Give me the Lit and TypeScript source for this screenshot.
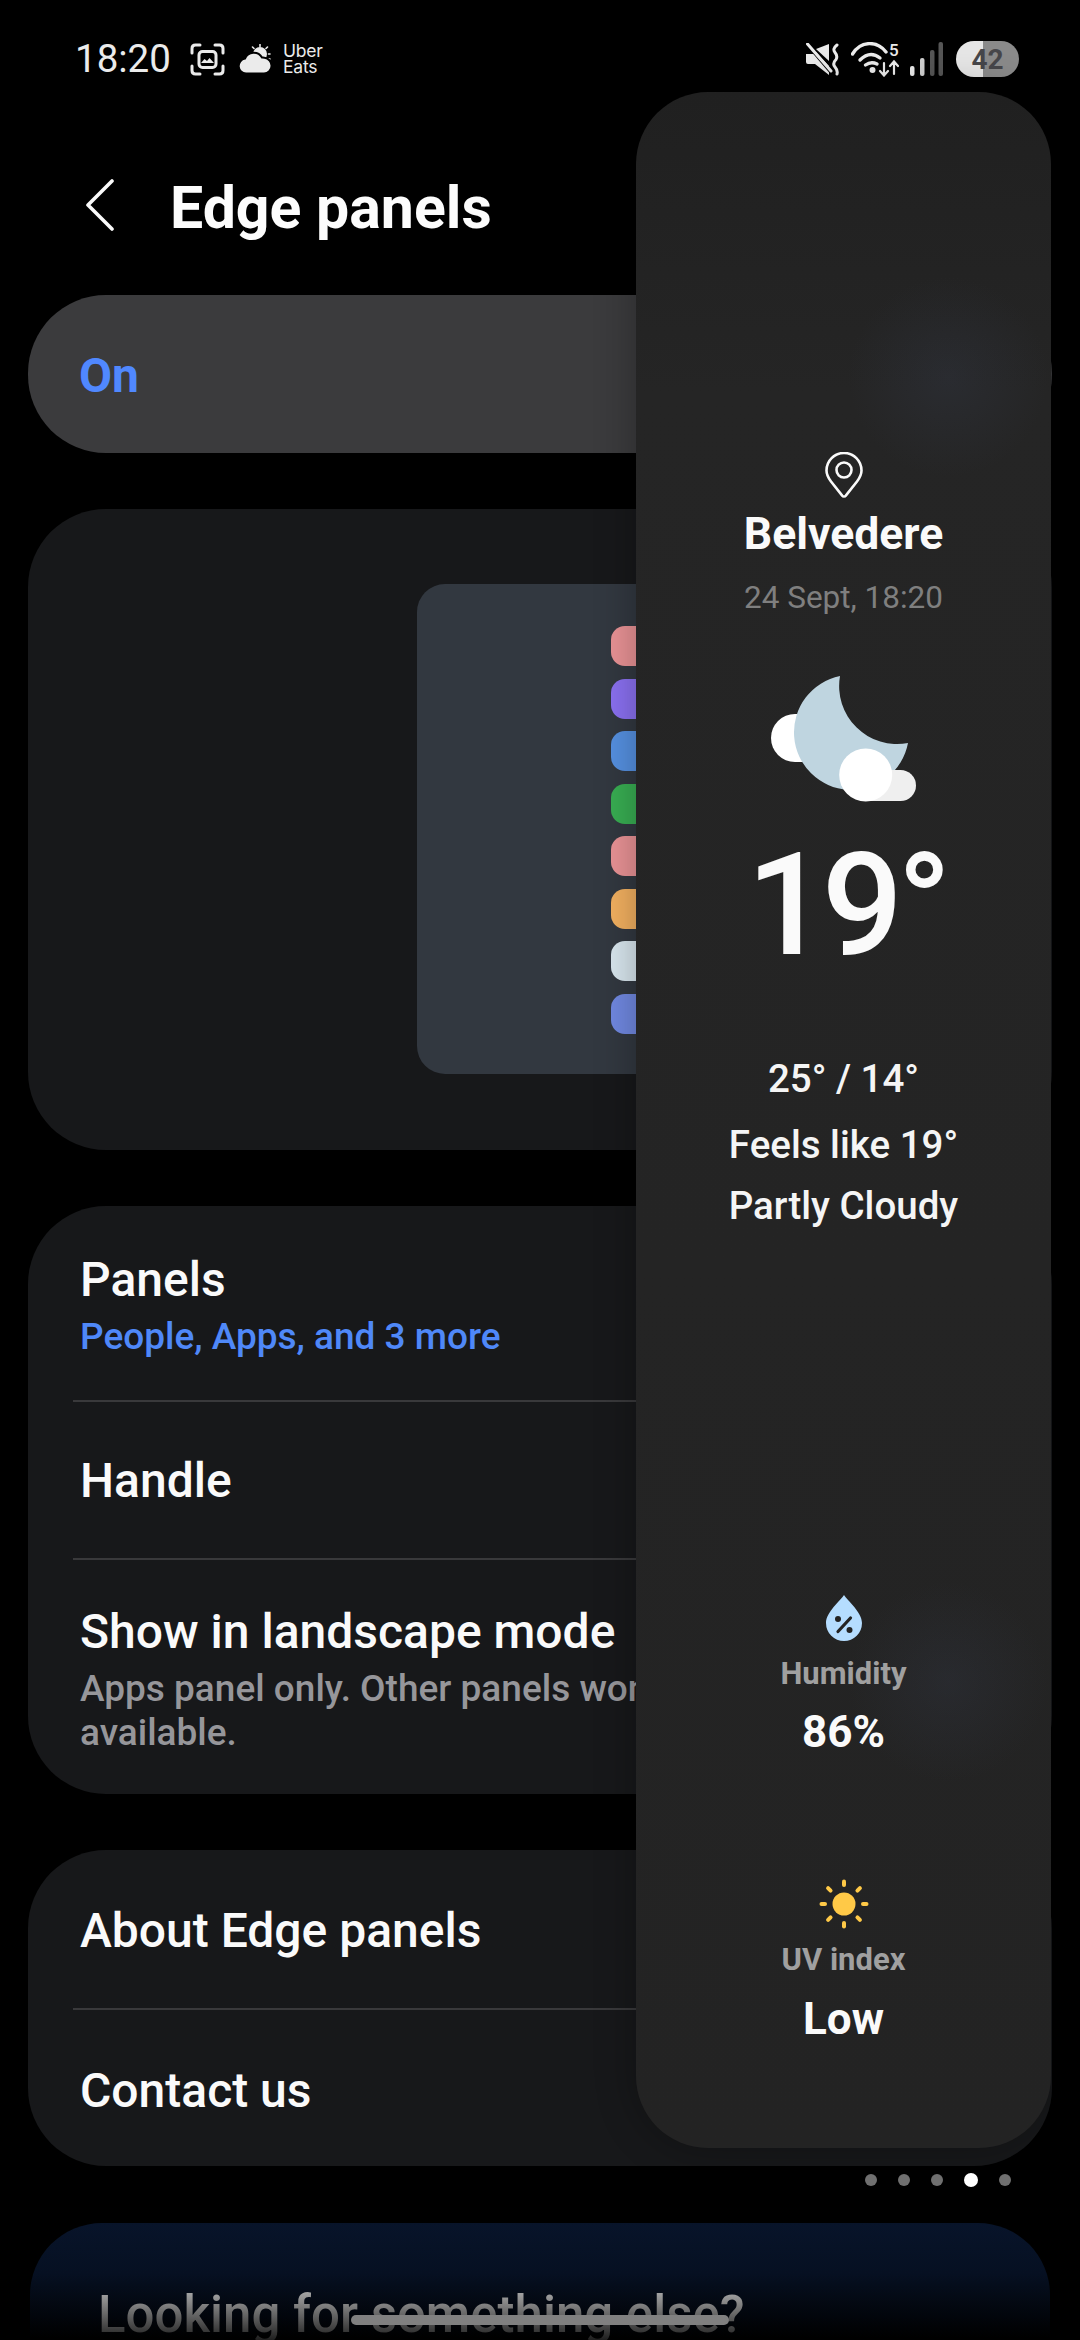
import { LitElement, html, css, svg } from "lit";
import { customElement } from "lit/decorators.js";

const APP_COLORS = ["#e89295", "#8a70f0", "#5590e0", "#38ad52", "#e89295", "#f2b060", "#d8e6ee", "#7088e0"];
const DOTS = [false, false, false, true, false];

@customElement("app-root")
export class AppRoot extends LitElement {
  static styles = css`
    :host { display: block; width: 1080px; height: 2340px; position: relative; overflow: hidden; background: #000; font-family: Roboto, "Liberation Sans", sans-serif; color: #fafafa; }
    svg { display: block; flex: none; }

    .status { height: 36px; padding: 41px 61px 0 75px; display: flex; align-items: center; justify-content: space-between; }
    .st-left, .st-right { display: flex; align-items: center; }
    .time { font-size: 38.500px; line-height: 36px; color: #ebebeb; width: 115px; }
    .st-shot { margin-right: 13px; }
    .uber { margin-left: 11px; font-family: Inter, sans-serif; font-size: 17.500px; line-height: 16px; color: #ebebeb; letter-spacing: -0.2px; }
    .st-wifi { margin: 0 11px; }
    .battery { margin-left: 13px; width: 63px; height: 36px; border-radius: 18px; display: flex; align-items: center; justify-content: center; background: linear-gradient(90deg, #e6e6e6 0 27px, #8a8a8a 27px); font-size: 28px; font-weight: 700; color: #46464a; }

    .header { height: 215px; box-sizing: border-box; padding: 47px 0 0 86px; display: flex; align-items: center; }
    .back { margin-bottom: 6px; }
    .title { margin-left: 56px; font-size: 59px; font-weight: 700; line-height: 68px; color: #fcfcfc; }

    .card { margin: 0 28px; background: #17181a; border-radius: 78px; }
    .on { margin-top: 3px; height: 158px; box-sizing: border-box; background: #3b3b3d; padding: 2px 0 0 51px; display: flex; align-items: center; font-size: 48px; font-weight: 700; color: #5088ff; }
    .preview { margin-top: 56px; height: 641px; padding: 75px 0 0 389px; box-sizing: border-box; }
    .phone { width: 248px; height: 490px; border-radius: 28px; background: #323840; box-sizing: border-box; padding: 42px 14px 0 0; display: flex; flex-direction: column; align-items: flex-end; gap: 12.500px; }
    .app { width: 40px; height: 40px; border-radius: 14px; flex: none; }

    .group { margin-top: 56px; padding: 0 45px; overflow: hidden; }
    .row { padding: 0 7px; border-bottom: 2px solid #39393b; box-sizing: border-box; }
    .row:last-child { border-bottom: 0; }
    .row-title { font-size: 48px; font-weight: 500; line-height: 54px; color: #fafafa; white-space: nowrap; }
    .row.simple { display: flex; align-items: center; }
    .row.handle { height: 158px; padding-top: 2px; }
    .row.about { height: 160px; padding-top: 4px; }
    .row.contact { height: 156px; padding-top: 6px; }
    .row.panels { padding-top: 47px; height: 196px; }
    .row.land { height: 234px; padding-top: 45px; }
    .sub { font-size: 37px; font-weight: 500; line-height: 46px; margin-top: 7px; color: #4f88f8; white-space: nowrap; }
    .sub.grey { color: #96969a; line-height: 44px; margin-top: 8px; width: 720px; white-space: normal; }

    .promo { margin: 57px 30px 0; height: 300px; border-radius: 72px; padding: 62px 0 0 68px; box-sizing: border-box; background: linear-gradient(180deg, #08142a 0, #061022 50px, #000 115px); }
    .promo-text { display: inline-block; font-size: 51px; font-weight: 500; line-height: 60px; color: transparent; background: linear-gradient(180deg, #aaaaaa 5px, #1f1f1f 55px); -webkit-background-clip: text; background-clip: text; }

    .overlay { position: absolute; left: 636px; top: 92px; width: 415px; }
    .panel { height: 2056px; border-radius: 72px; box-sizing: border-box; padding-top: 360px; display: flex; flex-direction: column; align-items: center; text-align: center; box-shadow: 0 0 40px rgba(0,0,0,.3);
      background:
        radial-gradient(circle at 312px 285px, rgba(60,68,90,.22), rgba(60,68,90,0) 100px),
        radial-gradient(circle at 312px 1590px, rgba(60,68,90,.2), rgba(60,68,90,0) 100px),
        linear-gradient(180deg, #202020, #252525 300px, #232323); }
    .city { margin-top: 10px; font-size: 44.500px; font-weight: 700; line-height: 52px; }
    .date { margin-top: 18px; font-size: 31.500px; line-height: 40px; color: #7f7f7f; }
    .wx { margin-top: 58px; }
    .temp { margin-top: 18px; padding-left: 5px; font-size: 143px; font-weight: 500; letter-spacing: -6px; line-height: 170px; }
    .line { font-size: 38.500px; font-weight: 500; line-height: 44px; color: #f5f5f5; }
    .line.a { margin-top: 67px; }
    .line.b { margin-top: 22px; }
    .line.c { margin-top: 17px; }
    .drop { margin-top: 367px; }
    .label { font-size: 31px; font-weight: 700; line-height: 40px; color: #a0a0a0; }
    .val { font-size: 44px; font-weight: 700; line-height: 52px; color: #fafafa; }
    .label.h { margin-top: 13px; }
    .val.h { margin-top: 12px; }
    .sun { margin-top: 121px; }
    .label.u { margin-top: 11px; }
    .val.u { margin-top: 13px; }

    .dots { height: 52px; padding-right: 40px; display: flex; align-items: center; justify-content: flex-end; gap: 21px; margin-top: 6px; }
    .dot { width: 12px; height: 12px; border-radius: 50%; background: #707070; }
    .dot.active { width: 14px; height: 14px; background: #fff; }

    .gesture { position: absolute; left: 351px; top: 2315px; width: 378px; height: 10px; border-radius: 5px; background: #808080; }
  `;

  private shotIcon() {
    return html`<svg class="st-shot" width="35" height="33" viewBox="0 0 35 33" fill="none" stroke="#ebebeb" stroke-width="3" stroke-linecap="round">
      <path d="M2 10V5.500Q2 2 5.500 2H10M25 2h4.500Q33 2 33 5.500V10M33 23v4.500Q33 31 29.500 31H25M10 31H5.500Q2 31 2 27.500V23"/>
      <rect x="9" y="8.500" width="17" height="16" rx="3.500"/>
      <path d="M11 20l3.500-4 2.500 2 2.500-3 4.500 5z" fill="#ebebeb" stroke="none"/>
    </svg>`;
  }

  private cloudSun() {
    return html`<svg width="34" height="30" viewBox="0 0 34 30">
      <circle cx="22" cy="10" r="7" fill="#ebebeb"/>
      <g stroke="#ebebeb" stroke-width="1.600" stroke-linecap="round">
        <path d="M22 0.500v2M14.500 3l1.500 1.500M29.500 3L28 4.500M32 10h-1.500M32 15h-1.500"/>
      </g>
      <path d="M8 29.500a7.500 7.500 0 0 1-1-14.900A9.500 9.500 0 0 1 24 13.500a7 7 0 0 1 2.500 0.200A8 8 0 0 1 33.500 22a7.500 7.500 0 0 1-7.500 7.500z" fill="#ebebeb" stroke="#000" stroke-width="2"/>
    </svg>`;
  }

  private muteIcon() {
    return html`<svg width="35" height="33" viewBox="0 0 35 33">
      <path d="M1 11h8l2-2 13 14v9L10 21H3q-2 0-2-2z" fill="#ebebeb"/>
      <path d="M11 6L24 1v17z" fill="#ebebeb"/>
      <path d="M2 2L25 29" stroke="#000" stroke-width="2"/>
      <path d="M2.500 1L26 28" stroke="#ebebeb" stroke-width="3" stroke-linecap="round"/>
      <path d="M32 2q-5 4-2 7.500t1 7q-4 4-1 7.500t2 7" fill="none" stroke="#ebebeb" stroke-width="3" stroke-linecap="round"/>
    </svg>`;
  }

  private wifiIcon() {
    return html`<svg class="st-wifi" width="48" height="35" viewBox="0 0 48 35" fill="none" stroke="#ebebeb" stroke-linecap="round">
      <path d="M1.500 12C10 -1.500 26 -1.500 35 10" stroke-width="3.400"/>
      <path d="M9 18Q19 8 29 16" stroke-width="3.400"/>
      <path d="M14.500 23Q20 19 26 22" stroke-width="3.400"/>
      <circle cx="21.500" cy="28" r="3" fill="#ebebeb" stroke="none"/>
      <path d="M33 21v12M29 29l4 4.500 4-4.500M43 32V20M39 24l4-4.500 4 4.500" stroke-width="2.200"/>
      <text x="38" y="13.500" fill="#ebebeb" stroke="none" font-size="17" font-weight="500" font-family="Roboto">5</text>
    </svg>`;
  }

  private signalIcon() {
    return html`<svg width="33" height="35" viewBox="0 0 33 35">
      <rect x="0" y="24" width="4.500" height="10" rx="2" fill="#ebebeb"/>
      <rect x="10" y="16" width="4.500" height="18" rx="2" fill="#d0d0d0"/>
      <rect x="20" y="8" width="4.500" height="26" rx="2" fill="#565656"/>
      <rect x="28.500" y="0" width="4.500" height="34" rx="2" fill="#565656"/>
    </svg>`;
  }

  private pinIcon() {
    return html`<svg width="38" height="46" viewBox="0 0 38 46" fill="none" stroke="#fafafa" stroke-width="2.600">
      <path d="M19 44.500q-1.200 0-2-1.100L6 29.500C3 25.500 1.500 22.500 1.500 18.500a17.500 17.500 0 0 1 35 0c0 4-1.500 7-4.500 11L21 43.400q-.8 1.100-2 1.100z" stroke-linejoin="round"/>
      <circle cx="19" cy="18" r="7.500"/>
    </svg>`;
  }

  private wxIcon() {
    return html`<svg class="wx" width="145" height="126" viewBox="770 676 145 126">
      <rect x="770" y="714" width="70" height="48" rx="24" fill="#ffffff"/>
      <path d="M839 676A57.500 57.500 0 1 0 907 743A58 58 0 0 1 839 676z" fill="#bfd5e0"/>
      <rect x="850" y="770" width="65" height="31" rx="15.500" fill="#efefef"/>
      <circle cx="864.700" cy="775" r="26.500" fill="#ffffff"/>
    </svg>`;
  }

  private dropIcon() {
    return html`<svg class="drop" width="36" height="46" viewBox="0 0 36 46">
      <path d="M18 0C15 5 0 17 0 28a18 18 0 0 0 36 0C36 17 21 5 18 0z" fill="#b5ddff"/>
      <circle cx="12" cy="24" r="3" fill="#232323"/>
      <circle cx="23.500" cy="35" r="3" fill="#232323"/>
      <path d="M12 36.500L24.500 23" stroke="#232323" stroke-width="3.200" stroke-linecap="round"/>
    </svg>`;
  }

  private sunIcon() {
    const rays = [0, 45, 90, 135, 180, 225, 270, 315].map(
      (a) => svg`<rect x="-2" y="-24.500" width="4" height="7.500" rx="2" transform="rotate(${a})" fill="#ffc947"/>`
    );
    return html`<svg class="sun" width="50" height="50" viewBox="-25 -25 50 50">
      <circle r="11.500" fill="#ffc947"/>${rays}
    </svg>`;
  }

  render() {
    return html`
      <div class="status">
        <div class="st-left">
          <span class="time">18:20</span>
          ${this.shotIcon()}${this.cloudSun()}
          <div class="uber">Uber<br />Eats</div>
        </div>
        <div class="st-right">
          ${this.muteIcon()}${this.wifiIcon()}${this.signalIcon()}
          <div class="battery">42</div>
        </div>
      </div>

      <div class="header">
        <svg class="back" width="28" height="52" viewBox="0 0 28 52" fill="none" stroke="#fafafa" stroke-width="3.600" stroke-linecap="round" stroke-linejoin="round"><path d="M26 2L2 26l24 24"/></svg>
        <div class="title">Edge panels</div>
      </div>

      <div class="card on">On</div>

      <div class="card preview">
        <div class="phone">
          ${APP_COLORS.map((c) => html`<div class="app" style="background:${c}"></div>`)}
        </div>
      </div>

      <div class="card group">
        <div class="row panels">
          <div class="row-title">Panels</div>
          <div class="sub">People, Apps, and 3 more</div>
        </div>
        <div class="row simple handle"><div class="row-title">Handle</div></div>
        <div class="row land">
          <div class="row-title">Show in landscape mode</div>
          <div class="sub grey">Apps panel only. Other panels won't be available.</div>
        </div>
      </div>

      <div class="card group">
        <div class="row simple about"><div class="row-title">About Edge panels</div></div>
        <div class="row simple contact"><div class="row-title">Contact us</div></div>
      </div>

      <div class="promo"><span class="promo-text">Looking for something else?</span></div>

      <div class="overlay">
        <div class="panel">
          ${this.pinIcon()}
          <div class="city">Belvedere</div>
          <div class="date">24 Sept, 18:20</div>
          ${this.wxIcon()}
          <div class="temp">19°</div>
          <div class="line a">25° / 14°</div>
          <div class="line b">Feels like 19°</div>
          <div class="line c">Partly Cloudy</div>
          ${this.dropIcon()}
          <div class="label h">Humidity</div>
          <div class="val h">86%</div>
          ${this.sunIcon()}
          <div class="label u">UV index</div>
          <div class="val u">Low</div>
        </div>
        <div class="dots">
          ${DOTS.map((d) => html`<div class="dot ${d ? "active" : ""}"></div>`)}
        </div>
      </div>

      <div class="gesture"></div>
    `;
  }
}
